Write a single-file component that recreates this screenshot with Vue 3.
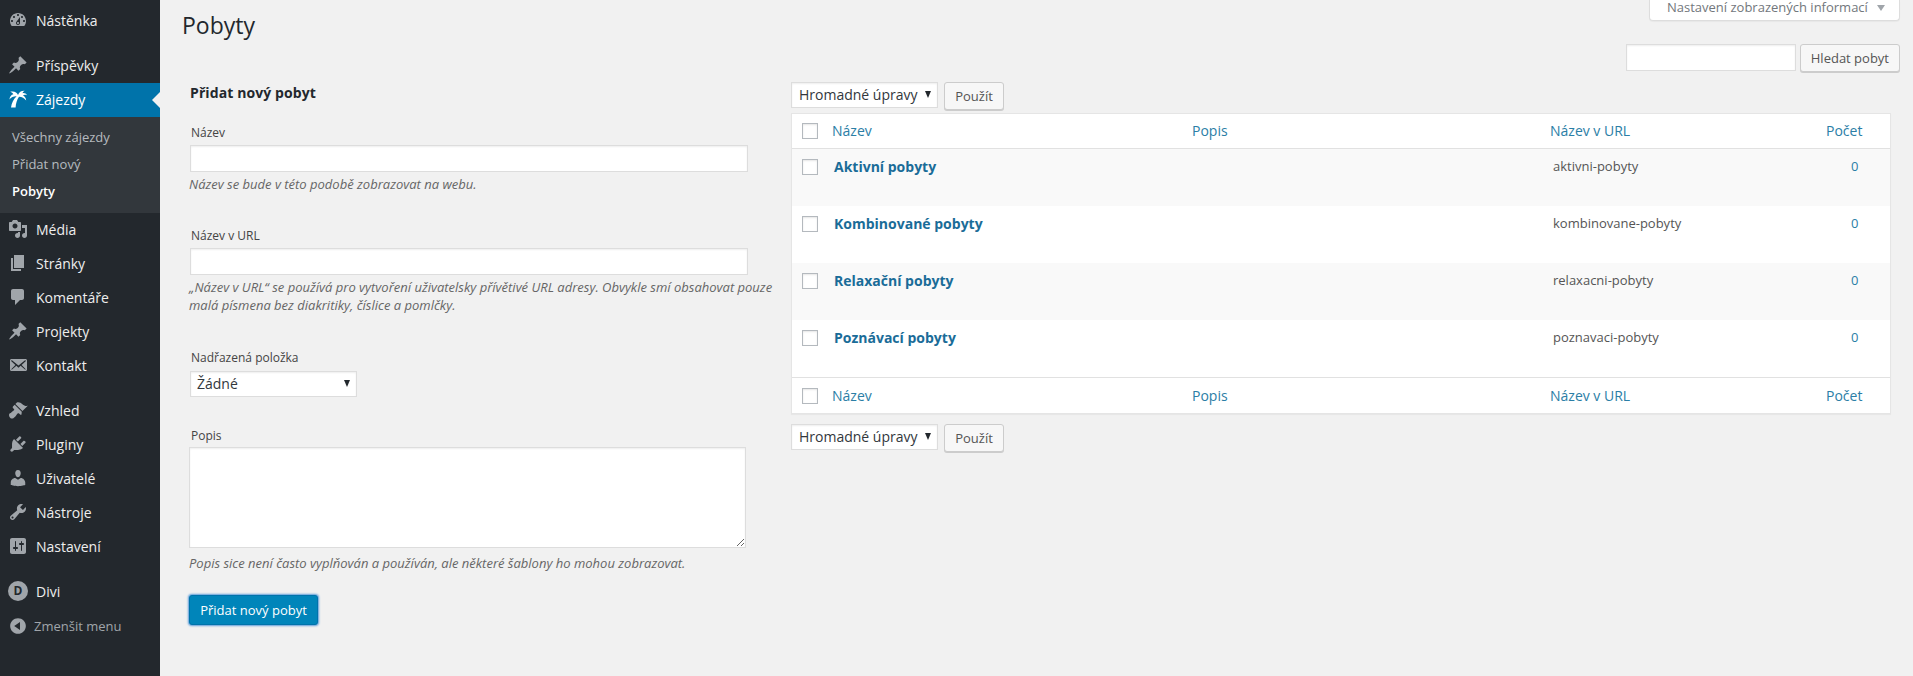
<script setup>
const icons = {
  dash: 'M3.76 16h12.48c1.1-1.37 1.76-3.11 1.76-5 0-4.42-3.58-8-8-8s-8 3.58-8 8c0 1.89.66 3.63 1.76 5zM10 4c.55 0 1 .45 1 1s-.45 1-1 1-1-.45-1-1 .45-1 1-1zM6 6c.55 0 1 .45 1 1s-.45 1-1 1-1-.45-1-1 .45-1 1-1zm8 0c.55 0 1 .45 1 1s-.45 1-1 1-1-.45-1-1 .45-1 1-1zm-5.37 5.55L12 7v6c0 1.1-.9 2-2 2s-2-.9-2-2c0-.57.24-1.08.63-1.45zM4 10c.55 0 1 .45 1 1s-.45 1-1 1-1-.45-1-1 .45-1 1-1zm12 0c.55 0 1 .45 1 1s-.45 1-1 1-1-.45-1-1 .45-1 1-1zm-5 3c0-.55-.45-1-1-1s-1 .45-1 1 .45 1 1 1 1-.45 1-1z',
  pin: 'M10.44 3.02l1.82-1.82 6.36 6.35-1.83 1.82c-1.05-.68-2.48-.57-3.41.36l-.75.75c-.92.93-1.04 2.35-.35 3.41l-1.83 1.82-2.41-2.41-2.8 2.79c-.42.42-3.38 2.71-3.8 2.29s1.86-3.39 2.28-3.81l2.79-2.79L4.1 9.36l1.83-1.82c1.05.69 2.48.57 3.4-.36l.75-.75c.93-.92 1.05-2.35.36-3.41z',
  palm: 'M3 18.6C3.6 14 5.6 10 8.6 7.2C6 7 3.4 8 1.4 10.4C1.8 7.6 3.2 5.6 5.4 5.2C4.8 4.2 3.8 3.4 2.2 2.8C6 1.8 8.8 3 10 6C11 3.2 13.4 1.6 16.6 1.8C15.6 2.4 14.8 3.2 14.4 4.2C16.4 3.8 18.2 4.6 19 6.2C17.4 5.6 16 5.6 15 6.4C16.8 7.2 18 9 18.2 11.4C16.4 9.2 14 8 11 7.8C9 10.6 7.8 14.4 7.6 18.6Z',
  media: 'M13 11V4c0-.55-.45-1-1-1h-1.67L9 1H5L3.67 3H2c-.55 0-1 .45-1 1v7c0 .55.45 1 1 1h10c.55 0 1-.45 1-1zM7 4.5c1.38 0 2.5 1.12 2.5 2.5S8.38 9.5 7 9.5 4.5 8.38 4.5 7 5.62 4.5 7 4.5zM14 6h5v10.5c0 1.38-1.12 2.5-2.5 2.5S14 17.88 14 16.5s1.12-2.5 2.5-2.5c.17 0 .34.02.5.05V9h-3V6zm-4 8.05V13h2v3.5c0 1.38-1.12 2.5-2.5 2.5S7 17.88 7 16.5 8.12 14 9.5 14c.17 0 .34.02.5.05z',
  page: 'M6 15V2h10v13H6zm-1 1h8v2H3V5h2v11z',
  comment: 'M5 2h9c1.1 0 2 .9 2 2v7c0 1.1-.9 2-2 2h-2l-5 5v-5H5c-1.1 0-2-.9-2-2V4c0-1.1.9-2 2-2z',
  mail: 'M19 14.5v-9c0-.83-.67-1.5-1.5-1.5H3.49c-.83 0-1.5.67-1.5 1.5v9c0 .83.67 1.5 1.5 1.5H17.5c.83 0 1.5-.67 1.5-1.5zm-1.31-9.11c.33.33.15.67-.03.84L13.6 9.95l3.9 4.06c.12.14.2.36.06.51-.13.16-.43.15-.56.05l-4.37-3.73-2.14 1.95-2.13-1.95-4.37 3.73c-.13.1-.43.11-.56-.05-.14-.15-.06-.37.06-.51l3.9-4.06-4.06-3.72c-.18-.17-.36-.51-.03-.84s.67-.17.95.07l6.24 5.04 6.25-5.04c.28-.24.62-.4.95-.07z',
  brush: 'M14.48 11.06L7.41 3.99l1.5-1.5c.5-.56 2.3-.47 3.51.32 1.21.8 1.43 1.28 2.91 2.1 1.18.64 2.45 1.26 4.45.85zm-.71.71L6.7 4.7 4.93 6.47c-.39.39-.39 1.02 0 1.41l1.06 1.06c.39.39.39 1.03 0 1.42-.6.6-1.43 1.11-2.21 1.69-.35.26-.7.53-1.01.84C1.43 13.23 1 14.12 1 15c0 .78.25 1.5.75 2.25.5.72 1.22 1.25 2.25 1.25.88 0 1.77-.43 3.11-1.77.31-.31.58-.66.84-1.01.58-.78 1.09-1.61 1.69-2.21.39-.39 1.03-.39 1.42 0l1.06 1.06c.39.39 1.02.39 1.41 0z',
  plug: 'M13.11 4.36L9.87 7.6 8 5.73l3.24-3.24c.35-.34 1.05-.2 1.56.32.52.51.66 1.21.31 1.55zm-8 1.77l.91-1.12 9.01 9.01-1.19.84c-.71.71-2.63 1.16-3.82 1.16H6.14L4.9 17.26c-.59.59-1.54.59-2.12 0-.59-.58-.59-1.53 0-2.12l1.24-1.24v-3.88c0-1.13.4-3.19 1.09-3.89zm7.26 3.97l3.24-3.24c.34-.35 1.04-.21 1.55.31.52.51.66 1.21.31 1.55l-3.24 3.25z',
  user: 'M10 9.25c-2.27 0-2.73-3.44-2.73-3.44C7 4.02 7.82 2 9.97 2c2.16 0 2.98 2.02 2.71 3.81 0 0-.41 3.44-2.68 3.44zm0 2.57L12.72 10c2.39 0 4.52 2.33 4.52 4.53v2.49s-3.65 1.13-7.24 1.13c-3.65 0-7.24-1.13-7.24-1.13v-2.49c0-2.25 1.94-4.48 4.47-4.48z',
  tool: 'M16.68 9.77c-1.34 1.34-3.3 1.67-4.95.99l-5.41 6.52c-.99.99-2.59.99-3.58 0s-.99-2.59 0-3.57l6.52-5.42c-.68-1.65-.35-3.61.99-4.95 1.28-1.28 3.12-1.62 4.72-1.06l-2.89 2.89 2.82 2.82 2.86-2.87c.53 1.58.18 3.39-1.08 4.67zM3.81 16.21c.4.39 1.04.39 1.43 0 .4-.4.4-1.04 0-1.43-.39-.4-1.03-.4-1.43 0-.39.39-.39 1.03 0 1.43z',
  settings: 'M18 16V4c0-1.1-.9-2-2-2H4c-1.1 0-2 .9-2 2v12c0 1.1.9 2 2 2h12c1.1 0 2-.9 2-2zM8 11h1c.55 0 1 .45 1 1s-.45 1-1 1H8v1.5c0 .28-.22.5-.5.5s-.5-.22-.5-.5V13H6c-.55 0-1-.45-1-1s.45-1 1-1h1V5.5c0-.28.22-.5.5-.5s.5.22.5.5V11zm5-2h-1c-.55 0-1-.45-1-1s.45-1 1-1h1V5.5c0-.28.22-.5.5-.5s.5.22.5.5V7h1c.55 0 1 .45 1 1s-.45 1-1 1h-1v5.5c0 .28-.22.5-.5.5s-.5-.22-.5-.5V9z',
  collapse: 'M10 2.16c4.33 0 7.84 3.51 7.84 7.84s-3.51 7.84-7.84 7.84S2.16 14.33 2.16 10 5.71 2.16 10 2.16zm2 11.72V6.12L6.18 9.97z'
}
const menu = [
  { label: 'Nástěnka', icon: 'dash' },
  { label: 'Příspěvky', icon: 'pin', sep: true },
  { label: 'Zájezdy', icon: 'palm', active: true, sub: ['Všechny zájezdy', 'Přidat nový', 'Pobyty'] },
  { label: 'Média', icon: 'media' },
  { label: 'Stránky', icon: 'page' },
  { label: 'Komentáře', icon: 'comment' },
  { label: 'Projekty', icon: 'pin' },
  { label: 'Kontakt', icon: 'mail' },
  { label: 'Vzhled', icon: 'brush', sep: true },
  { label: 'Pluginy', icon: 'plug' },
  { label: 'Uživatelé', icon: 'user' },
  { label: 'Nástroje', icon: 'tool' },
  { label: 'Nastavení', icon: 'settings' },
  { label: 'Divi', divi: true, sep: true }
]
const rows = [
  { name: 'Aktivní pobyty', slug: 'aktivni-pobyty' },
  { name: 'Kombinované pobyty', slug: 'kombinovane-pobyty' },
  { name: 'Relaxační pobyty', slug: 'relaxacni-pobyty' },
  { name: 'Poznávací pobyty', slug: 'poznavaci-pobyty' }
]
</script>

<template>
  <div class="page">
    <aside class="sidebar">
      <template v-for="m in menu" :key="m.label">
        <div class="item" :class="{ sep: m.sep, active: m.active }">
          <span v-if="m.divi" class="divi">D</span>
          <svg v-else class="icon" viewBox="0 0 20 20"><path :d="icons[m.icon]" /></svg>
          <span>{{ m.label }}</span>
        </div>
        <div v-if="m.sub" class="submenu">
          <div v-for="(s, i) in m.sub" :key="s" class="subitem" :class="{ current: i === 2 }">{{ s }}</div>
        </div>
      </template>
      <div class="collapse">
        <svg class="icon" viewBox="0 0 20 20"><path :d="icons.collapse" /></svg>
        <span>Zmenšit menu</span>
      </div>
    </aside>

    <main class="main">
      <div class="topbar">
        <h1>Pobyty</h1>
        <div class="screen-tab">Nastavení zobrazených informací<i></i></div>
      </div>
      <div class="search">
        <input class="field search-input" type="text" />
        <button class="btn">Hledat pobyt</button>
      </div>
      <div class="cols">
        <section class="left">
          <h2>Přidat nový pobyt</h2>
          <label class="lbl first">Název</label>
          <input class="field wide" type="text" />
          <p class="desc">Název se bude v této podobě zobrazovat na webu.</p>
          <label class="lbl url">Název v URL</label>
          <input class="field wide" type="text" />
          <p class="desc">„Název v URL“ se používá pro vytvoření uživatelsky přívětivé URL adresy. Obvykle smí obsahovat pouze malá písmena bez diakritiky, číslice a pomlčky.</p>
          <label class="lbl parent">Nadřazená položka</label>
          <div class="select parent-select">Žádné</div>
          <label class="lbl popis">Popis</label>
          <textarea class="field area"></textarea>
          <p class="desc">Popis sice není často vyplňován a používán, ale některé šablony ho mohou zobrazovat.</p>
          <button class="primary">Přidat nový pobyt</button>
        </section>

        <section class="right">
          <div class="bulk">
            <div class="select bulk-select">Hromadné úpravy</div>
            <button class="btn apply">Použít</button>
          </div>
          <div class="table">
            <div class="tr head">
              <span class="check"></span><a>Název</a><a>Popis</a><a>Název v URL</a><a>Počet</a>
            </div>
            <div v-for="r in rows" :key="r.slug" class="tr row">
              <span class="check"></span>
              <strong>{{ r.name }}</strong>
              <span></span>
              <span class="slug">{{ r.slug }}</span>
              <a class="count">0</a>
            </div>
            <div class="tr head foot">
              <span class="check"></span><a>Název</a><a>Popis</a><a>Název v URL</a><a>Počet</a>
            </div>
          </div>
          <div class="bulk bottom">
            <div class="select bulk-select">Hromadné úpravy</div>
            <button class="btn apply">Použít</button>
          </div>
        </section>
      </div>
    </main>
  </div>
</template>

<style>
html, body { margin: 0; background: #f1f1f1; overflow: hidden; }
</style>

<style scoped>
* { box-sizing: border-box; }
.page {
  display: flex;
  width: 1913px;
  height: 676px;
  overflow: hidden;
  background: #f1f1f1;
  font-family: "Open Sans", sans-serif;
  color: #444;
  font-size: 13px;
}
.sidebar {
  width: 160px;
  flex: none;
  background: #23282d;
  padding-top: 4px;
  color: #eee;
}
.item {
  height: 34px;
  display: flex;
  align-items: center;
  padding: 0 0 2px 8px;
  gap: 8px;
  font-size: 14px;
  position: relative;
}
.item.sep { margin-top: 11px; }
.icon { width: 20px; height: 20px; fill: #a0a5aa; flex: none; }
.item.active { background: #0073aa; color: #fff; }
.item.active .icon { fill: #fff; }
.item.active::after {
  content: "";
  position: absolute;
  right: 0;
  top: 9px;
  border: 8px solid transparent;
  border-right-color: #f1f1f1;
  border-left-width: 0;
}
.submenu {
  background: #32373c;
  height: 96px;
  padding-top: 7px;
}
.subitem {
  height: 27px;
  line-height: 26px;
  padding-left: 12px;
  color: rgba(240, 245, 250, .7);
  font-size: 13px;
}
.subitem.current { color: #fff; font-weight: 600; }
.divi {
  width: 20px;
  height: 20px;
  border-radius: 50%;
  background: #a0a5aa;
  color: #23282d;
  font-size: 12px;
  font-weight: 700;
  line-height: 20px;
  text-align: center;
  flex: none;
}
.collapse {
  height: 34px;
  display: flex;
  align-items: center;
  gap: 6px;
  padding-left: 8px;
  color: #a0a5aa;
  font-size: 13px;
}
.main { flex: 1; min-width: 0; padding-right: 13px; }
.topbar {
  height: 44px;
  display: flex;
  justify-content: space-between;
  align-items: flex-start;
}
h1 {
  margin: 8px 0 0 22px;
  font-size: 23px;
  line-height: 34px;
  font-weight: 400;
  color: #23282d;
}
.screen-tab {
  width: 251px;
  height: 21px;
  background: #fff;
  border: 1px solid #ddd;
  border-top: 0;
  box-shadow: 0 1px 1px rgba(0, 0, 0, .04);
  border-radius: 0 0 4px 4px;
  color: #72777c;
  font-size: 13px;
  line-height: 15px;
  padding-left: 17px;
  display: flex;
  align-items: flex-start;
}
.screen-tab i {
  margin: 5px 0 0 9px;
  border: 4px solid transparent;
  border-top: 6px solid #a0a5aa;
  border-bottom: 0;
}
.search {
  display: flex;
  justify-content: flex-end;
  gap: 4px;
  height: 28px;
}
.field {
  display: block;
  background: #fff;
  border: 1px solid #ddd;
  box-shadow: inset 0 1px 2px rgba(0, 0, 0, .07);
  outline: 0;
  padding: 0;
  margin: 0;
}
.search-input { width: 170px; height: 27px; }
.btn {
  height: 28px;
  padding: 0 10px;
  background: #f7f7f7;
  border: 1px solid #ccc;
  border-radius: 3px;
  box-shadow: 0 1px 0 #ccc;
  color: #555;
  font: 13px/26px "Open Sans", sans-serif;
  white-space: nowrap;
}
.cols {
  display: flex;
  margin-top: 10px;
  padding-left: 29px;
}
.left { width: 602px; flex: none; padding-top: 1px; }
h2 {
  margin: 0;
  padding-left: 1px;
  font-size: 14px;
  line-height: 20px;
  font-weight: 700;
  letter-spacing: .1px;
  color: #23282d;
}
.lbl {
  display: block;
  font-size: 12px;
  line-height: 18px;
  padding-left: 2px;
  color: #444;
}
.lbl.first { margin-top: 21px; margin-bottom: 3px; }
.lbl.url { margin-top: 34px; margin-bottom: 3px; }
.lbl.parent { margin-top: 35px; margin-bottom: 4px; }
.lbl.popis { margin-top: 30px; margin-bottom: 2px; }
.wide { width: 558px; height: 27px; margin-left: 1px; }
.area { width: 557px; height: 101px; display: block; resize: vertical; }
.desc {
  margin: 3px 0 0;
  width: 585px;
  font-style: italic;
  font-size: 13px;
  line-height: 18px;
  color: #666;
}
.area + .desc { margin-top: 6px; }
.select {
  position: relative;
  height: 26px;
  background: #fff;
  border: 1px solid #ddd;
  box-shadow: inset 0 1px 2px rgba(0, 0, 0, .07);
  font-size: 14px;
  line-height: 24px;
  padding-left: 6px;
  color: #32373c;
}
.select::after {
  content: "";
  position: absolute;
  right: 6px;
  top: 8px;
  border: 3.5px solid transparent;
  border-top: 7px solid #23282d;
  border-bottom: 0;
}
.parent-select { width: 167px; margin-left: 1px; }
.primary {
  display: block;
  width: 129px;
  height: 30px;
  margin-top: 23px;
  padding: 0;
  background: #0085ba;
  border: 1px solid #0073aa;
  border-radius: 3px;
  box-shadow: 0 0 2px 1px #5b9dd9;
  color: #fff;
  font: 13px/28px "Open Sans", sans-serif;
}
.right { width: 1100px; flex: none; }
.bulk { display: flex; gap: 6px; height: 31px; }
.bulk.bottom { margin-top: 10px; }
.bulk-select { width: 147px; padding-left: 7px; }
.apply { width: 60px; padding: 0; }
.table {
  background: #fff;
  border: 1px solid #e5e5e5;
  box-shadow: 0 1px 1px rgba(0, 0, 0, .04);
}
.tr {
  display: grid;
  grid-template-columns: 40px 360px 358px 276px 1fr;
}
.tr a { color: #2b7ea6; }
.head {
  height: 35px;
  align-items: center;
  font-size: 14px;
  padding-bottom: 2px;
  border-bottom: 1px solid #e1e1e1;
}
.head .check { margin-top: 1px; }
.foot { height: 36px; padding-bottom: 0; border-bottom: 0; border-top: 1px solid #e1e1e1; }
.check {
  display: block;
  width: 16px;
  height: 16px;
  margin-left: 10px;
  background: #fff;
  border: 1px solid #b4b9be;
  box-shadow: inset 0 1px 2px rgba(0, 0, 0, .1);
}
.row { height: 57px; align-items: start; padding-top: 8px; }
.row:nth-child(even) { background: #f9f9f9; }
.row .check { margin-top: 2px; }
.row strong {
  padding-left: 2px;
  font-size: 14px;
  line-height: 20px;
  font-weight: 700;
  color: #1a6c98;
}
.slug { padding-left: 3px; font-size: 13px; line-height: 18px; color: #555; }
.row .count { padding-left: 25px; font-size: 13px; line-height: 18px; }
</style>
